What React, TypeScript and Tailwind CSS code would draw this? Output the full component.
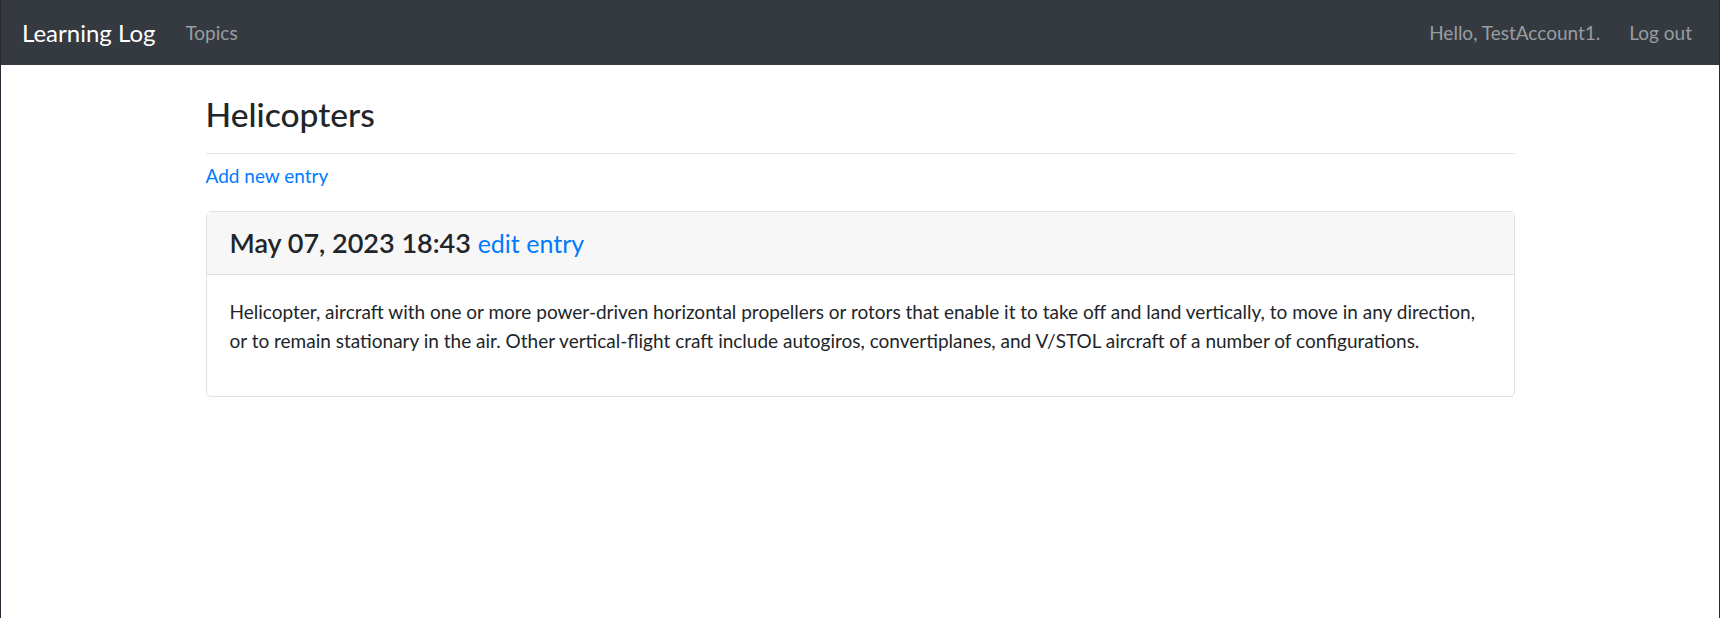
export default function App() {
  return (
    <div className="h-[618px] border-x border-[#2b2a37] bg-white font-['Lato',sans-serif] text-[#212529]">
      <nav className="flex h-[65px] items-center bg-[#343a40] pl-[21px] pr-[27px]">
        <a className="text-[24px] leading-none text-white">Learning Log</a>
        <a className="ml-[30px] text-[19px] leading-none text-[#9a9da0]">Topics</a>
        <div className="ml-auto flex items-center gap-[29px] text-[19px] leading-none text-[#9a9da0]">
          <span>Hello, TestAccount1.</span>
          <a>Log out</a>
        </div>
      </nav>

      <main className="mx-auto w-[1309px] pt-[29px]">
        <h2 className="text-[33.6px] font-medium leading-[1.2]">Helicopters</h2>
        <hr className="mt-[18.5px] border-t border-[#e5e5e5]" />
        <p className="mt-[8.4px] text-[19px] leading-[28.5px]">
          <a className="text-[#007bff]">Add new entry</a>
        </p>

        <div className="mt-[20.5px] rounded-[5px] border border-[#e0e0e0]">
          <div className="border-b border-[#e0e0e0] bg-[#f7f7f7] px-[23px] py-[14.5px]">
            <h4 className="text-[27px] font-semibold leading-[1.2]">
              May 07, 2023 18:43{" "}
              <a className="text-[25px] font-normal text-[#007bff]">edit entry</a>
            </h4>
          </div>
          <div className="px-[23px] pb-[41px] pt-[22px]">
            <p className="text-[19px] leading-[29px]">
              Helicopter, aircraft with one or more power-driven horizontal
              propellers or rotors that enable it to take off and land
              vertically, to move in any direction, or to remain stationary in
              the air. Other vertical-flight craft include autogiros,
              convertiplanes, and V/STOL aircraft of a number of configurations.
            </p>
          </div>
        </div>
      </main>
    </div>
  );
}
